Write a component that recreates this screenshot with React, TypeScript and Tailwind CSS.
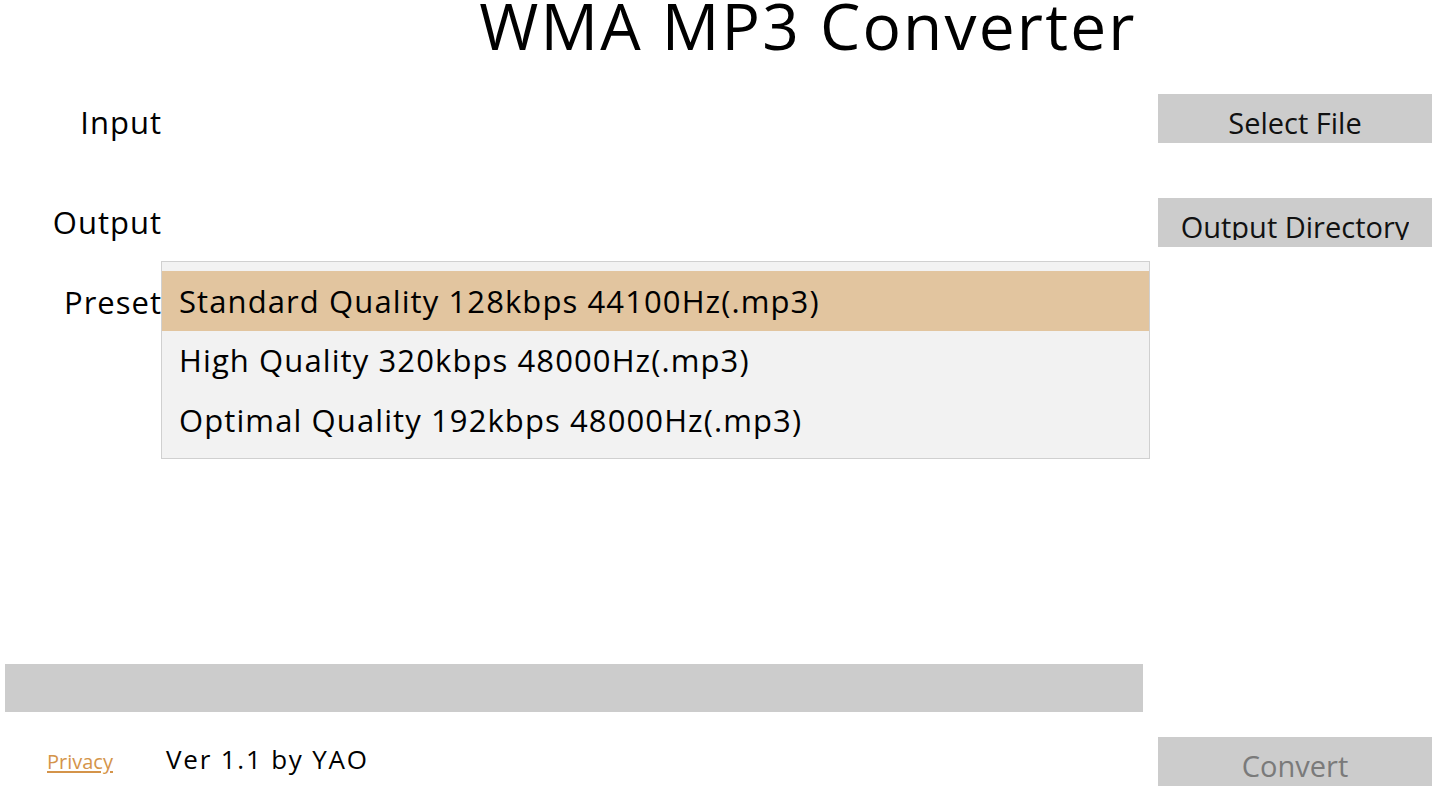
import React from "react";

function Btn({ label, muted, clip }: { label: string; muted?: boolean; clip?: boolean }) {
  return (
    <div className="h-[49px] w-[274px] bg-[#cccccc] flex justify-center">
      <div className={clip ? "h-[42px] overflow-hidden" : "h-[49px]"}>
        <span
          className={`block text-[29px] leading-[60px] -mt-[1px] whitespace-nowrap ${
            muted ? "text-[#7a7a7a]" : "text-[#111111]"
          } ${clip ? "" : "h-[49px]"}`}
        >
          {label}
        </span>
      </div>
    </div>
  );
}

export default function App() {
  const presets = [
    "Standard Quality 128kbps 44100Hz(.mp3)",
    "High Quality 320kbps 48000Hz(.mp3)",
    "Optimal Quality 192kbps 48000Hz(.mp3)",
  ];
  return (
    <div
      className="w-[1440px] h-[810px] bg-white overflow-hidden text-black"
      style={{ fontFamily: '"Open Sans", "Noto Sans", sans-serif' }}
    >
      <div className="flex justify-center pl-[176px]">
        <h1 className="-mt-[6px] text-[64px] leading-[64px] font-normal tracking-[2.2px] whitespace-nowrap">
          WMA MP3 Converter
        </h1>
      </div>
      <div className="flex">
        <div className="w-[1150px] flex flex-col">
          <div className="mt-[44px] flex">
            <div className="w-[162px] text-right text-[31px] leading-[40px] tracking-[1px]">Input</div>
          </div>
          <div className="mt-[60px] flex">
            <div className="w-[162px] text-right text-[31px] leading-[40px] tracking-[1px]">Output</div>
          </div>
          <div className="mt-[19px] flex">
            <div className="w-[161px] pt-[21px] flex justify-end">
              <span className="mr-[-1px] text-[31px] leading-[40px] tracking-[1px]">Preset</span>
            </div>
            <div className="w-[989px] h-[198px] border border-[#d0d0d0] bg-[#f2f2f2] pt-[9px]">
              {presets.map((p, i) => (
                <div
                  key={p}
                  className={`h-[59.5px] pl-[17px] flex items-center text-[31px] leading-[40px] tracking-[1.1px] whitespace-nowrap ${
                    i === 0 ? "bg-[#e2c59f]" : ""
                  }`}
                >
                  {p}
                </div>
              ))}
            </div>
          </div>
          <div className="mt-[205px] ml-[5px] w-[1138px] h-[48px] bg-[#cccccc]" />
          <div className="mt-[30px] flex items-baseline">
            <a
              href="#"
              className="ml-[47px] text-[20px] leading-[34px] text-[#d4944a] underline underline-offset-2"
            >
              Privacy
            </a>
            <span className="ml-[53px] text-[26px] leading-[34px] tracking-[1.8px]">Ver 1.1 by YAO</span>
          </div>
        </div>
        <div className="ml-[8px] flex flex-col">
          <div className="mt-[36px]">
            <Btn label="Select File" />
          </div>
          <div className="mt-[55px]">
            <Btn label="Output Directory" clip />
          </div>
          <div className="mt-[490px]">
            <Btn label="Convert" muted />
          </div>
        </div>
      </div>
    </div>
  );
}
